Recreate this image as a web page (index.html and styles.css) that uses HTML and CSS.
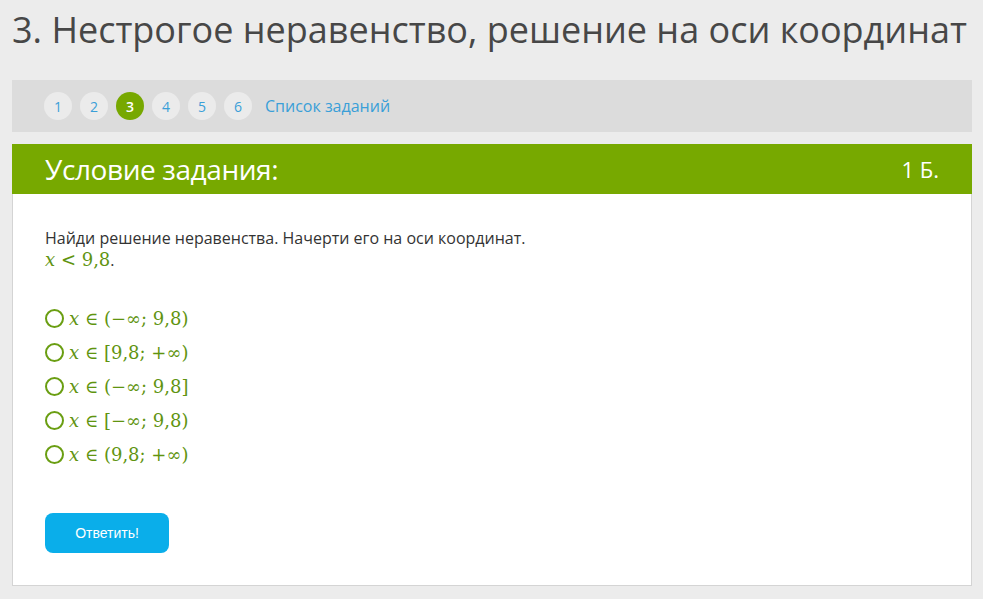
FILE: index.html
```html
<!DOCTYPE html>
<html>
<head>
  <meta charset="utf-8">
  <title>Нестрогое неравенство</title>
  <link rel="stylesheet" href="styles.css">
</head>
<body>
  <div class="page">
    <h1 class="page-title">3. Нестрогое неравенство, решение на оси координат</h1>
    <div class="task-nav">
      <a class="task-num">1</a>
      <a class="task-num">2</a>
      <a class="task-num active">3</a>
      <a class="task-num">4</a>
      <a class="task-num">5</a>
      <a class="task-num">6</a>
      <a class="task-list">Список заданий</a>
    </div>
    <div class="task-card">
      <div class="card-header">
        <span class="card-title">Условие задания:</span>
        <span class="points">1 Б.</span>
      </div>
      <div class="card-body">
        <p class="question">Найди решение неравенства. Начерти его на оси координат.<br>
          <span class="math"><i>x</i> &lt; 9,8</span>.</p>
        <div class="answers">
          <label class="answer"><span class="radio"></span><span class="math"><i>x</i> ∈ (−∞; 9,8)</span></label>
          <label class="answer"><span class="radio"></span><span class="math"><i>x</i> ∈ [9,8; +∞)</span></label>
          <label class="answer"><span class="radio"></span><span class="math"><i>x</i> ∈ (−∞; 9,8]</span></label>
          <label class="answer"><span class="radio"></span><span class="math"><i>x</i> ∈ [−∞; 9,8)</span></label>
          <label class="answer"><span class="radio"></span><span class="math"><i>x</i> ∈ (9,8; +∞)</span></label>
        </div>
        <button class="submit">Ответить!</button>
      </div>
    </div>
  </div>
</body>
</html>
```

FILE: styles.css
```css
* {
  margin: 0;
  padding: 0;
  box-sizing: border-box;
}
body {
  background: #ececec;
  font-family: 'Open Sans', 'Noto Sans', sans-serif;
  color: #333;
}
.page {
  padding: 0 11px 0 12px;
}
.page-title {
  font-size: 36px;
  font-weight: 400;
  color: #474747;
  line-height: 60px;
  white-space: nowrap;
}
.task-nav {
  margin-top: 20px;
  height: 52px;
  background: #dcdcdc;
  display: flex;
  align-items: center;
  padding-left: 32px;
  gap: 8px;
}
.task-num {
  width: 28px;
  height: 28px;
  border-radius: 50%;
  background: #ebebeb;
  color: #3a9fd8;
  font-size: 14px;
  display: flex;
  align-items: center;
  justify-content: center;
}
.task-num.active {
  background: #77a800;
  color: #fff;
  font-weight: 600;
}
.task-list {
  color: #3a9fd8;
  font-size: 16px;
  margin-left: 5px;
}
.task-card {
  margin-top: 12px;
  background: #fff;
  border: 1px solid #d4d4d4;
  border-top: none;
}
.card-header {
  height: 50px;
  background: #77a900;
  color: #fff;
  display: flex;
  align-items: center;
  justify-content: space-between;
  padding: 0 33px;
  margin: 0 -1px;
}
.card-title {
  font-size: 28px;
  letter-spacing: -0.4px;
}
.points {
  font-size: 22px;
}
.card-body {
  padding: 33px 32px 32px;
}
.question {
  font-size: 16px;
  line-height: 22px;
}
.math {
  font-family: 'DejaVu Serif', 'Liberation Serif', serif;
  color: #5f9410;
}
.question .math {
  font-size: 18px;
}
.answers {
  margin-top: 36px;
  display: flex;
  flex-direction: column;
  gap: 12px;
}
.answer {
  display: flex;
  align-items: center;
  gap: 5px;
  height: 22px;
}
.answer .math {
  font-size: 18px;
}
.radio {
  width: 19px;
  height: 19px;
  border: 2px solid #6a9e12;
  border-radius: 50%;
}
.submit {
  margin-top: 48px;
  width: 124px;
  height: 40px;
  border: none;
  border-radius: 8px;
  background: #0aaeea;
  color: #fff;
  font-family: 'Liberation Sans', Arial, sans-serif;
  font-size: 14px;
}
```
